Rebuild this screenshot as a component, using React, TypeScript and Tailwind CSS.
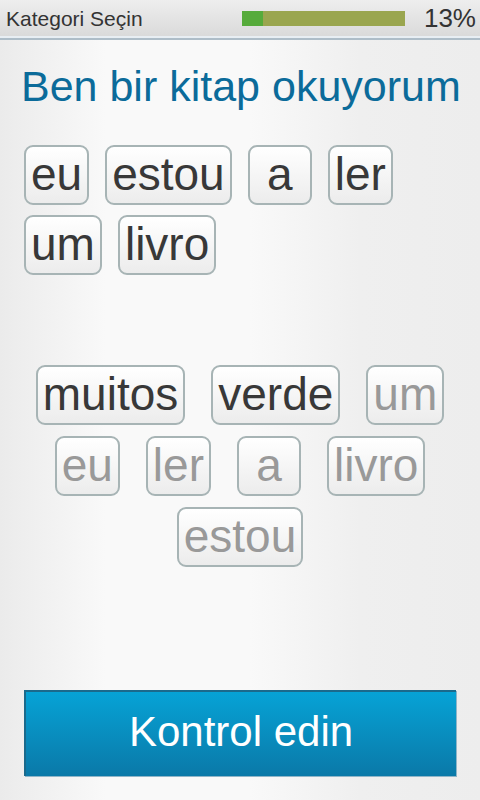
import React from "react";

type ChipProps = { text: string; faded?: boolean };

function Chip({ text, faded }: ChipProps) {
  return (
    <div
      className={`h-[60px] min-w-[64px] px-[5px] flex items-center justify-center rounded-[9px] border-2 border-[#a7b4b5] bg-gradient-to-b from-[#ffffff] to-[#ececec] text-[46px] leading-none ${
        faded ? "text-[#999999]" : "text-[#383838]"
      }`}
      style={{ fontFamily: '"Liberation Sans", Arial, sans-serif' }}
    >
      <span className="-mt-[2px]">{text}</span>
    </div>
  );
}

export default function App() {
  const font = { fontFamily: '"Liberation Sans", Arial, sans-serif' };
  return (
    <div
      className="w-[480px] h-[800px] flex flex-col bg-[linear-gradient(to_right,#ebebeb_0%,#f9f9f9_22%,#f9f9f9_52%,#efefef_75%,#ededed_100%)]"
      style={font}
    >
      {/* Header */}
      <div className="h-[36px] flex items-center bg-gradient-to-b from-[#eeeeee] to-[#dadada] pl-[6px] pr-[4px]">
        <div className="text-[21px] text-[#333333] leading-none">Kategori Seçin</div>
        <div className="ml-auto flex items-center">
          <div className="w-[163px] h-[15px] bg-[#9aa64f] flex">
            <div className="w-[21px] h-full bg-[#56ab3b]" />
          </div>
          <div className="ml-[19px] text-[26px] leading-none text-[#333333]">13%</div>
        </div>
      </div>
      <div className="h-[2px] bg-[#e8eef3]" />
      <div className="h-[2px] bg-[#aebdc8]" />

      {/* Title */}
      <div className="mt-[22px] px-[21px] text-[43px] leading-[48px] text-[#0b6b9a] whitespace-nowrap">
        Ben bir kitap okuyorum
      </div>

      {/* Answer area */}
      <div className="mt-[35px] pl-[24px] pr-[20px] flex flex-wrap gap-x-[16px] gap-y-[10px]">
        <Chip text="eu" />
        <Chip text="estou" />
        <Chip text="a" />
        <Chip text="ler" />
        <Chip text="um" />
        <Chip text="livro" />
      </div>

      {/* Word bank */}
      <div className="mt-[90px] px-[20px] flex flex-wrap justify-center gap-x-[26px] gap-y-[11px]">
        <Chip text="muitos" />
        <Chip text="verde" />
        <Chip text="um" faded />
        <Chip text="eu" faded />
        <Chip text="ler" faded />
        <Chip text="a" faded />
        <Chip text="livro" faded />
        <Chip text="estou" faded />
      </div>

      {/* Button */}
      <div className="mt-auto mb-[24px] mx-[24px] h-[86px] flex items-center justify-center border-t-2 border-l-2 border-[#1b6a8c] bg-gradient-to-b from-[#06a3d6] to-[#0a79a8] shadow-[1px_1px_0_#8fb5c8]">
        <span className="text-[42px] text-white leading-none -mt-[4px]">Kontrol edin</span>
      </div>
    </div>
  );
}
